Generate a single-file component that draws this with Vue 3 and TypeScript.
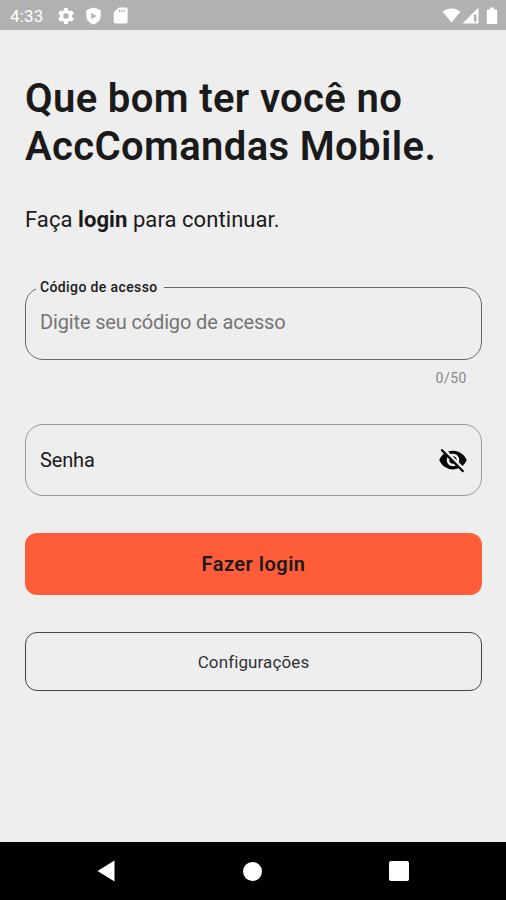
<script setup lang="ts">
import { computed, ref } from 'vue'

const maxLength = 50
const accessCode = ref('')
const password = ref('')
const hidden = ref(true)
const counter = computed(() => `${accessCode.value.length}/${maxLength}`)
</script>

<template>
  <div class="screen">
    <header class="status">
      <span class="clock">4:33</span>
      <svg class="gear" viewBox="0 0 24 24"><path fill-rule="evenodd" d="M19.14 12.94a7.5 7.5 0 0 0 0-1.88l2.03-1.58a.5.5 0 0 0 .12-.61l-1.92-3.32a.5.5 0 0 0-.59-.22l-2.39.96a7 7 0 0 0-1.62-.94l-.36-2.54A.5.5 0 0 0 13.92 2.4h-3.84a.5.5 0 0 0-.48.41l-.36 2.54a7 7 0 0 0-1.62.94l-2.39-.96a.5.5 0 0 0-.59.22L2.74 8.87a.5.5 0 0 0 .12.61l2.03 1.58a7.5 7.5 0 0 0 0 1.88l-2.03 1.58a.5.5 0 0 0-.12.61l1.92 3.32c.12.22.37.29.59.22l2.39-.96c.5.38 1.03.7 1.62.94l.36 2.54c.05.24.24.41.48.41h3.84c.24 0 .44-.17.47-.41l.36-2.54a7 7 0 0 0 1.62-.94l2.39.96c.22.08.47 0 .59-.22l1.92-3.32a.5.5 0 0 0-.12-.61zM12 15.3a3.3 3.3 0 1 1 0-6.600 3.300 3.300 0 0 1 0 6.600z" /></svg>
      <svg class="shield" viewBox="0 0 24 24"><path fill-rule="evenodd" d="M12 .8 2.500 4v8c0 5.500 4 9.700 9.500 11.200 5.500-1.500 9.500-5.700 9.500-11.200V4zM9 8v8l7-4z" /></svg>
      <svg class="card" viewBox="0 0 24 24"><path fill-rule="evenodd" d="M19 2h-9L3.500 8v12a2 2 0 0 0 2 2H19a2 2 0 0 0 2-2V4a2 2 0 0 0-2-2zM10 4.500h1.500V7.500H10zM13 4.500h1.500v3H13zM16 4.500h1.500v3H16z" /></svg>
      <span class="spacer"></span>
      <svg class="wifi" viewBox="0 0 20 16"><path d="M10 15.500.5 4C3 1.800 6.300.5 10 .5s7 1.300 9.500 3.500z" /></svg>
      <svg class="signal" viewBox="0 0 17 17"><path fill-rule="evenodd" d="M16.500.5V16.500H.5zM12 7.500v7.200H14.500V7.500z" /></svg>
      <svg class="battery" viewBox="0 0 12 18"><path d="M4 .5h4v2h2a1.200 1.200 0 0 1 1.200 1.200v12.100A1.200 1.200 0 0 1 10 17H2a1.200 1.200 0 0 1-1.200-1.200V3.700A1.200 1.200 0 0 1 2 2.500h2z" /></svg>
    </header>

    <main class="content">
      <h1 class="title"><span class="line">Que bom ter você no</span><span class="line">AccComandas Mobile.</span></h1>
      <p class="subtitle">Faça <b>login</b> para continuar.</p>

      <fieldset class="field code">
        <legend>Código de acesso</legend>
        <input v-model="accessCode" :maxlength="maxLength" placeholder="Digite seu código de acesso" aria-label="Código de acesso" />
      </fieldset>
      <div class="counter">{{ counter }}</div>

      <div class="field password">
        <input v-model="password" :type="hidden ? 'password' : 'text'" placeholder="Senha" aria-label="Senha" />
        <button class="eye" type="button" aria-label="Mostrar senha" @click="hidden = !hidden">
          <svg viewBox="0 0 24 24"><path d="M12 7c2.760 0 5 2.240 5 5 0 .65-.13 1.260-.36 1.830l2.920 2.920c1.510-1.260 2.700-2.890 3.430-4.750-1.730-4.390-6-7.500-11-7.500-1.400 0-2.740.25-3.980.7l2.160 2.160C10.740 7.130 11.350 7 12 7zM2 4.270l2.280 2.280.46.46C3.080 8.300 1.780 10.020 1 12c1.730 4.390 6 7.500 11 7.500 1.550 0 3.030-.3 4.380-.84l.42.42L19.730 22 21 20.730 3.270 3 2 4.270zM7.530 9.800l1.550 1.550c-.05.21-.08.43-.08.65 0 1.660 1.340 3 3 3 .22 0 .44-.03.65-.08l1.550 1.550c-.67.33-1.410.53-2.200.53-2.760 0-5-2.240-5-5 0-.79.2-1.530.53-2.200zm4.310-.78 3.150 3.150.02-.16c0-1.660-1.340-3-3-3l-.17.01z" /></svg>
        </button>
      </div>

      <button class="login" type="button"><span>Fazer login</span></button>
      <button class="settings" type="button"><span>Configurações</span></button>
    </main>

    <nav class="navbar">
      <svg class="back" viewBox="0 0 18 22"><path d="M17.500.5v21L.5 11z" /></svg>
      <span class="home"></span>
      <span class="recent"></span>
    </nav>
  </div>
</template>

<style>
body {
  background: #eee;
}
</style>

<style scoped>
.screen {
  display: flex;
  flex-direction: column;
  height: 900px;
  background: #eee;
  color: #1a1a1a;
  font-family: Roboto, "Liberation Sans", sans-serif;
}
.status {
  display: flex;
  align-items: center;
  box-sizing: border-box;
  height: 30px;
  padding: 1px 8px 0 10px;
  background: #b1b1b1;
  color: #fff;
}
.status svg {
  flex: none;
  fill: #fff;
}
.clock {
  width: 46px;
  font-size: 17px;
  letter-spacing: 0.2px;
  line-height: 20px;
}
.gear { width: 20px; height: 20px; }
.shield { width: 19px; height: 18px; margin-left: 8px; }
.card { width: 19px; height: 19px; margin-left: 8px; }
.spacer { flex: 1; }
.wifi { width: 19px; height: 15px; }
.signal { width: 17px; height: 17px; margin-left: 1px; }
.battery { width: 12px; height: 18px; margin-left: 7px; }
.content {
  display: flex;
  flex: 1;
  flex-direction: column;
  padding: 45px 24px 0 25px;
}
.title {
  margin: 0;
  font-size: 40px;
  font-weight: 600;
  letter-spacing: 0.37px;
  line-height: 48px;
  white-space: nowrap;
}
.line { display: block; }
.subtitle {
  margin: 36px 0 0;
  font-size: 22px;
  letter-spacing: 0.07px;
  line-height: 26px;
}
.field {
  box-sizing: border-box;
  min-width: 0;
  margin: 0;
  border: 1px solid #666;
  border-radius: 18px;
}
.field input {
  display: block;
  min-width: 0;
  width: 100%;
  padding: 0;
  border: 0;
  outline: 0;
  background: transparent;
  color: #1a1a1a;
  font: 20px/24px Roboto, "Liberation Sans", sans-serif;
  letter-spacing: -0.15px;
}
.code {
  height: 81px;
  margin-top: 46px;
  padding: 15px 14px 0 10px;
}
.code legend {
  height: 16px;
  padding: 0 6px 0 4px;
  font-size: 14px;
  font-weight: 500;
  letter-spacing: 0.38px;
  line-height: 17px;
}
.code input {
  padding-left: 4px;
}
.code input::placeholder {
  color: #757575;
  opacity: 1;
}
.counter {
  margin: 9px 15px 0 0;
  color: #888;
  font-size: 14px;
  letter-spacing: 0.5px;
  line-height: 18px;
  text-align: right;
}
.password {
  display: flex;
  align-items: center;
  height: 72px;
  margin-top: 37px;
  padding: 0 13px 0 14px;
  border-color: #999;
}
.password input::placeholder {
  color: #1a1a1a;
  opacity: 1;
}
.eye {
  display: flex;
  flex: none;
  padding: 0;
  border: 0;
  background: none;
}
.eye svg {
  width: 30px;
  height: 30px;
  fill: #080808;
}
.login,
.settings {
  box-sizing: border-box;
  padding: 0;
  border: 0;
  border-radius: 12px;
  color: #1a1a1a;
  font-family: inherit;
}
.login {
  height: 62px;
  margin-top: 37px;
  background: #ff5c39;
  font-size: 20px;
  font-weight: 600;
  letter-spacing: 0.5px;
}
.settings {
  height: 59px;
  margin-top: 37px;
  border: 1px solid #444;
  background: transparent;
  color: #333;
  font-size: 17px;
  letter-spacing: 0.12px;
}
.navbar {
  display: flex;
  align-items: center;
  box-sizing: border-box;
  height: 58px;
  padding: 0 97px 0 96px;
  justify-content: space-between;
  background: #000;
}
.back { width: 20px; height: 22px; fill: #fff; }
.home { width: 19px; height: 19px; border-radius: 50%; background: #fff; }
.recent { width: 20px; height: 20px; border-radius: 2px; background: #fff; }
</style>
